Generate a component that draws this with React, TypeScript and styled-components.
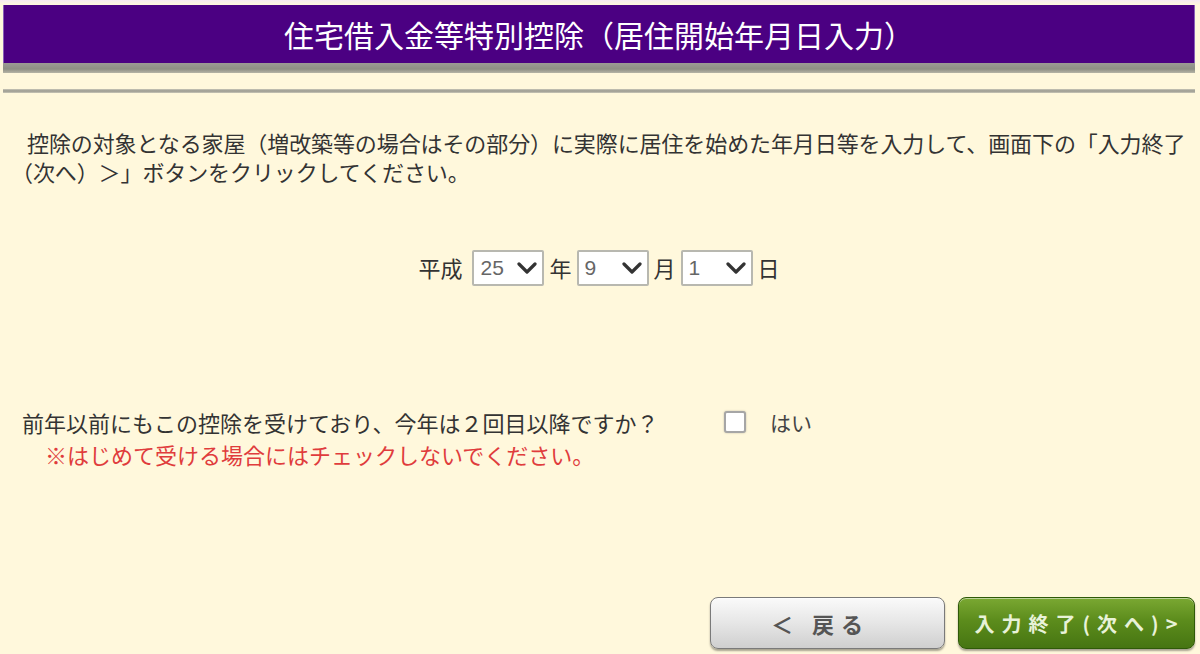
import React, {useState} from 'react';
import styled, {createGlobalStyle} from 'styled-components';

const GlobalStyle = createGlobalStyle`
  html, body {
    margin: 0;
    padding: 0;
    background: #fff8dc;
  }
  body {
    font-family: "Noto Sans CJK JP", "Noto Sans", sans-serif;
    color: #333;
  }
`;

const Page = styled.div`
  display: flex;
  flex-direction: column;
  width: 1200px;
  height: 654px;
  box-sizing: border-box;
  padding: 5px 5px 0 3px;
  background: linear-gradient(#f6e8f2 0, #fff8dc 5px);
  overflow: hidden;
`;

const Banner = styled.div`
  display: flex;
  align-items: center;
  justify-content: center;
  height: 58px;
  background: #4b0082;
  box-shadow: inset 1px 0 0 #8a5fb8, inset -1px 0 0 #8a5fb8;
  color: #fff;
  font-size: 30px;
  line-height: 1;
`;

const BannerShade = styled.div`
  height: 10px;
  background: linear-gradient(#9c9a94, #8e8e84 60%, #b5b4a6);
`;

const Rule = styled.div`
  height: 4px;
  margin-top: 16px;
  background: linear-gradient(#c9c7b8, #9a998f 50%, #c9c7b8);
`;

const Lead = styled.p`
  margin: 35px 0 0;
  padding-left: 8px;
  font-size: 22px;
  line-height: 29px;
  white-space: nowrap;
  letter-spacing: -0.1px;
  color: #333;
  > .first {
    padding-left: 16px;
  }
`;

const DateRow = styled.div`
  display: flex;
  align-items: center;
  justify-content: center;
  gap: 5px;
  margin-top: 63px;
  font-size: 22px;
  color: #333;
  > .label {
    margin-right: 5px;
  }
`;

const SelectBox = styled.div`
  position: relative;
  width: 72px;
  height: 36px;
  > select {
    appearance: none;
    width: 100%;
    height: 100%;
    box-sizing: border-box;
    border: 2px solid #b8b8b0;
    border-radius: 2px;
    background: #fff;
    padding: 0 0 0 6px;
    font-family: "Liberation Sans", "Noto Sans", sans-serif;
    font-size: 21px;
    color: #666;
    outline: none;
  }
  > svg {
    position: absolute;
    right: 7px;
    top: 13px;
    pointer-events: none;
  }
`;

const Question = styled.div`
  display: flex;
  align-items: center;
  margin-top: 121px;
  padding-left: 19px;
  font-size: 22px;
  line-height: 32px;
  color: #333;
  > .text {
    width: 702px;
  }
`;

const CheckLabel = styled.label`
  display: flex;
  align-items: center;
  gap: 24px;
  font-size: 21px;
  color: #444;
  > input {
    appearance: none;
    width: 22px;
    height: 22px;
    margin: 0;
    border: 2px solid #a6a6a6;
    border-radius: 3px;
    background: #fff;
    box-shadow: 0 0 2px rgba(0, 0, 0, 0.25);
  }
`;

const Note = styled.div`
  padding-left: 42px;
  font-size: 22px;
  line-height: 32px;
  color: #e03c3c;
`;

const ButtonBar = styled.div`
  display: flex;
  justify-content: flex-end;
  gap: 13px;
  margin-top: 127px;
`;

const NavButton = styled.button<{ $primary?: boolean }>`
  width: ${p => (p.$primary ? '237px' : '235px')};
  height: 52px;
  border-radius: 8px;
  font-family: "Noto Sans CJK JP", sans-serif;
  font-size: ${p => (p.$primary ? '20px' : '22px')};
  font-weight: ${p => (p.$primary ? 700 : 700)};
  letter-spacing: ${p => (p.$primary ? '7px' : '7px')};
  padding: ${p => (p.$primary ? '0 0 0 6px' : '0 14px 0 0')};
  cursor: pointer;
  border: 1px solid ${p => (p.$primary ? '#2f5a08' : '#7a7a7a')};
  color: ${p => (p.$primary ? '#e8f2d8' : '#555')};
  background: ${p => p.$primary
    ? 'linear-gradient(#7aa832, #5c8c1c 45%, #467512 100%)'
    : 'linear-gradient(#fafafa, #e6e6e6 50%, #cfcfcf 100%)'};
  box-shadow: inset 0 1px 0 rgba(255, 255, 255, 0.5), 0 2px 2px rgba(0, 0, 0, 0.35);
`;

function Chevron() {
  return (
    <svg width="20" height="12" viewBox="0 0 20 12">
      <path d="M2 2 L10 10 L18 2" fill="none" stroke="#333" strokeWidth="3.2" strokeLinecap="round" strokeLinejoin="round"/>
    </svg>
  );
}

function DateSelect(props: { value: string; options: string[]; onChange: (v: string) => void }) {
  return (
    <SelectBox>
      <select value={props.value} onChange={e => props.onChange(e.target.value)}>
        {props.options.map(o => <option key={o} value={o}>{o}</option>)}
      </select>
      <Chevron/>
    </SelectBox>
  );
}

const range = (from: number, to: number) =>
  Array.from({length: to - from + 1}, (_, i) => String(from + i));

function App() {
  const [year, setYear] = useState('25');
  const [month, setMonth] = useState('9');
  const [day, setDay] = useState('1');
  const [repeat, setRepeat] = useState(false);

  return (
    <Page>
      <GlobalStyle/>
      <Banner>住宅借入金等特別控除（居住開始年月日入力）</Banner>
      <BannerShade/>
      <Rule/>
      <Lead>
        <span className="first">控除の対象となる家屋（増改築等の場合はその部分）に実際に居住を始めた年月日等を入力して、画面下の「入力終了</span>
        <br/>
        （次へ）＞」ボタンをクリックしてください。
      </Lead>
      <DateRow>
        <span className="label">平成</span>
        <DateSelect value={year} options={range(1, 31)} onChange={setYear}/>
        <span>年</span>
        <DateSelect value={month} options={range(1, 12)} onChange={setMonth}/>
        <span>月</span>
        <DateSelect value={day} options={range(1, 31)} onChange={setDay}/>
        <span>日</span>
      </DateRow>
      <Question>
        <span className="text">前年以前にもこの控除を受けており、今年は２回目以降ですか？</span>
        <CheckLabel>
          <input type="checkbox" checked={repeat} onChange={e => setRepeat(e.target.checked)}/>
          はい
        </CheckLabel>
      </Question>
      <Note>※はじめて受ける場合にはチェックしないでください。</Note>
      <ButtonBar>
        <NavButton>＜ 戻る</NavButton>
        <NavButton $primary>入力終了(次へ)&gt;</NavButton>
      </ButtonBar>
    </Page>
  );
}

export default App;
